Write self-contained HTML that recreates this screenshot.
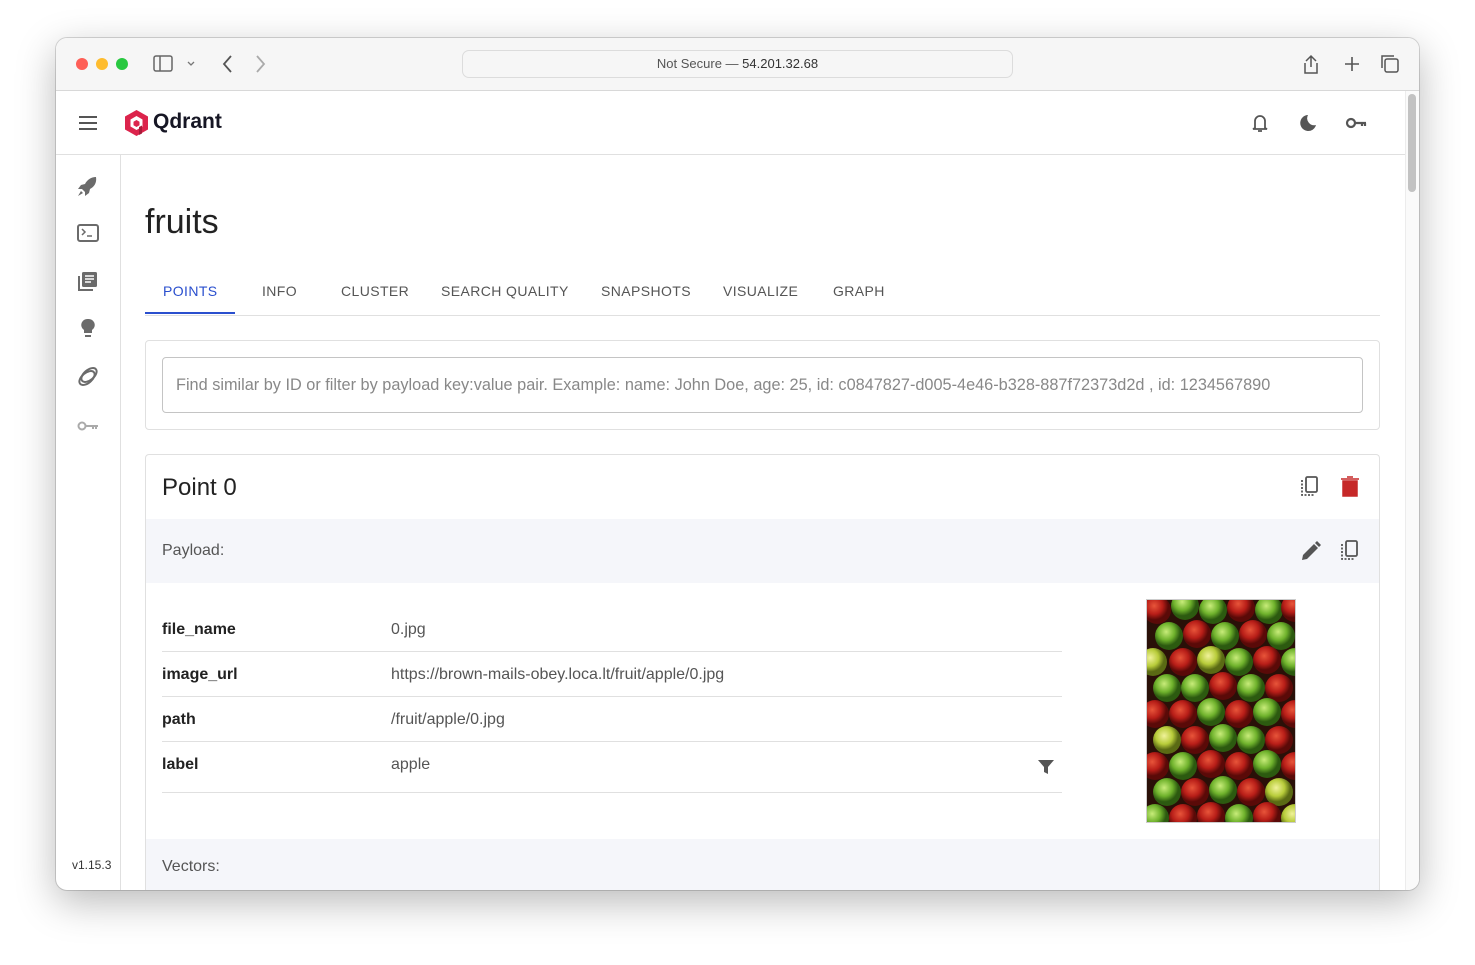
<!DOCTYPE html>
<html><head><meta charset="utf-8"><style>
*{box-sizing:border-box;margin:0;padding:0}
body{width:1475px;height:965px;background:#fff;font-family:"Liberation Sans",Arial,sans-serif;position:relative;overflow:hidden}
.win{position:absolute;left:56px;top:38px;width:1363px;height:852px;border-radius:11px;overflow:hidden;background:#fff;box-shadow:0 12px 40px rgba(0,0,0,.28),0 0 0 1px rgba(0,0,0,.15)}
.tb{position:absolute;left:0;top:0;width:100%;height:53px;background:#f6f6f6;border-bottom:1px solid #d8d8d8}
.dot{position:absolute;top:20px;width:12px;height:12px;border-radius:50%}
.url{position:absolute;left:406px;top:12px;width:551px;height:28px;border:1px solid #dcdcdc;border-radius:7px;background:#f6f6f6;font-size:13px;color:#333;text-align:center;line-height:26px}
.hdr{position:absolute;left:0;top:53px;width:1349px;height:64px;border-bottom:1px solid #e0e0e0}
.side{position:absolute;left:0;top:117px;width:65px;height:735px;border-right:1px solid #e0e0e0}
.scroll{position:absolute;left:1349px;top:53px;width:14px;height:799px;background:#fafafa;border-left:1px solid #ececec}
.thumb{position:absolute;left:1352px;top:56px;width:8px;height:98px;background:#c2c2c2;border-radius:4px}
.abs{position:absolute}
.tab{position:absolute;top:245px;font-size:14px;color:#555;letter-spacing:.4px}
.card{position:absolute;left:89px;width:1235px;border:1px solid #e0e0e0;border-radius:4px;background:#fff}
.row{position:absolute;left:106px;width:900px;height:45px;border-bottom:1px solid #e0e0e0;font-size:16px}
.row b{position:absolute;left:0;top:14px;color:#222}
.row span{position:absolute;left:229px;top:14px;color:#555}
</style></head><body>
<div class="win">
<div class="tb">
<div class="dot" style="left:20px;background:#fe5f57"></div>
<div class="dot" style="left:40px;background:#febc2e"></div>
<div class="dot" style="left:60px;background:#28c840"></div>
<svg class="abs" style="left:97px;top:17px" width="60" height="18"><rect x="1" y="1" width="18" height="15" rx="2" fill="none" stroke="#666" stroke-width="1.5"/><line x1="7" y1="1" x2="7" y2="16" stroke="#666" stroke-width="1.5"/><path d="M35 7l3 3 3-3" fill="none" stroke="#777" stroke-width="1.3"/></svg>
<svg class="abs" style="left:163px;top:16px" width="50" height="20"><path d="M12 2l-7 8 7 8" fill="none" stroke="#555" stroke-width="1.8"/><path d="M38 2l7 8-7 8" fill="none" stroke="#aaa" stroke-width="1.8"/></svg>
<div class="url"><span style="color:#555">Not Secure — </span>54.201.32.68</div>
<svg class="abs" style="left:1243px;top:14px" width="110" height="24"><path d="M17 9l-5-5-5 5M12 4v11M6 11v10h12V11" fill="none" stroke="#555" stroke-width="1.5"/><path d="M53 5v14M46 12h14" stroke="#555" stroke-width="1.6"/><rect x="86" y="7" width="13" height="13" rx="2" fill="none" stroke="#555" stroke-width="1.5"/><path d="M83 16V4h12" fill="none" stroke="#555" stroke-width="1.5"/></svg>
</div>
<div class="hdr">
<svg class="abs" style="left:22px;top:24px" width="20" height="16"><path d="M1 2h18M1 8h18M1 14h18" stroke="#555" stroke-width="2"/></svg>
<svg class="abs" style="left:68px;top:18px" width="25" height="28"><path d="M12.5 1L24 7.5v13L12.5 27 1 20.5v-13z" fill="#dc244c"/><path d="M12.5 7l6 3.5v7l-6 3.5-6-3.5v-7z" fill="#fff"/><path d="M12.5 11l3 1.8v3.5l-3 1.7-3-1.7v-3.5z" fill="#dc244c"/><path d="M15 18v8l3-1.5v-8z" fill="#a81c3a"/></svg>
<div class="abs" style="left:97px;top:19px;font-size:21px;font-weight:bold;color:#161624">Qdrant</div>
<svg class="abs" style="left:1194px;top:20px" width="120" height="24"><path d="M5 17V10a5 5 0 0110 0v7l2 1H3zM8 20h4" fill="none" stroke="#555" stroke-width="1.8"/><path d="M58 4a8 8 0 108 10 7 7 0 01-8-10z" fill="#555"/><circle cx="101" cy="12" r="4" fill="none" stroke="#555" stroke-width="2.2"/><path d="M105 12h11M112 12v3M115 12v3" stroke="#555" stroke-width="2.2"/></svg>
</div>
<div class="side">
<svg class="abs" style="left:21px;top:21px" width="22" height="270" fill="#6b6b6b">
<path d="M19 1c-5 0-9 3-11 7l-4 1-3 4 4 0 3 3 0 4 4-3 1-4c4-2 7-6 6-12zM4 15l-3 5 5-3z"/>
<rect x="1" y="49" width="20" height="16" rx="2" fill="none" stroke="#6b6b6b" stroke-width="2"/><path d="M5 53l3 3-3 3M10 60h5" stroke="#6b6b6b" stroke-width="1.5" fill="none"/>
<rect x="5" y="96" width="15" height="15" rx="1.5"/><path d="M2 100v14h14" stroke="#6b6b6b" stroke-width="2" fill="none"/><path d="M8 100h9M8 103h9M8 106h6" stroke="#fff" stroke-width="1.4"/>
<path d="M11 143a6 6 0 00-4 11v3h8v-3a6 6 0 00-4-11zM8 159h6v2H8z"/>
<ellipse cx="12" cy="199" rx="9" ry="5" transform="rotate(-40 12 199)" fill="none" stroke="#6b6b6b" stroke-width="2"/><ellipse cx="10" cy="202" rx="9" ry="5" transform="rotate(-40 10 202)" fill="none" stroke="#6b6b6b" stroke-width="2"/>
<circle cx="5" cy="250" r="3.5" fill="none" stroke="#aaa" stroke-width="2"/><path d="M9 250h12M16 250v3M19 250v3" stroke="#aaa" stroke-width="2"/>
</svg>
<div class="abs" style="left:16px;top:703px;font-size:12px;color:#333">v1.15.3</div>
</div>
<div class="abs" style="left:89px;top:165px;font-size:34px;color:#222">fruits</div>
<div class="tab" style="left:107px;color:#2a4fce">POINTS</div>
<div class="abs" style="left:89px;top:274px;width:90px;height:2px;background:#2a4fce"></div>
<div class="tab" style="left:206px">INFO</div>
<div class="tab" style="left:285px">CLUSTER</div>
<div class="tab" style="left:385px">SEARCH QUALITY</div>
<div class="tab" style="left:545px">SNAPSHOTS</div>
<div class="tab" style="left:667px">VISUALIZE</div>
<div class="tab" style="left:777px">GRAPH</div>
<div class="abs" style="left:89px;top:277px;width:1235px;height:1px;background:#e0e0e0"></div>
<div class="card" style="top:302px;height:90px">
<div class="abs" style="left:16px;top:16px;width:1201px;height:56px;border:1px solid #c4c4c4;border-radius:4px;font-size:16.3px;color:#888;padding:18px 13px;white-space:nowrap">Find similar by ID or filter by payload key:value pair. Example: name: John Doe, age: 25, id: c0847827-d005-4e46-b328-887f72373d2d , id: 1234567890</div>
</div>
<div class="card" style="top:416px;height:460px;border-bottom:none">
<div class="abs" style="left:16px;top:19px;font-size:24px;color:#222">Point 0</div>
<svg class="abs" style="left:1154px;top:20px" width="70" height="24"><rect x="6" y="2" width="11" height="15" rx="1.5" fill="none" stroke="#555" stroke-width="1.8"/><path d="M2 5v15h12" fill="none" stroke="#555" stroke-width="1.8" stroke-dasharray="2 1.5"/><path d="M43 6h14v15H43zM41 4h18M47 2h6" fill="#c62828" stroke="#c62828" stroke-width="1.5"/></svg>
<div class="abs" style="left:0;top:64px;width:1233px;height:64px;background:#f5f6fa"></div>
<div class="abs" style="left:16px;top:87px;font-size:16px;color:#555">Payload:</div>
<svg class="abs" style="left:1154px;top:84px" width="70" height="24"><path d="M2 21l1-5L14 5l4 4L7 20zM15 4l2-2 4 4-2 2z" fill="#555"/><rect x="46" y="2" width="11" height="15" rx="1.5" fill="none" stroke="#555" stroke-width="1.8"/><path d="M42 5v15h12" fill="none" stroke="#555" stroke-width="1.8" stroke-dasharray="2 1.5"/></svg>
<svg class="abs" style="left:1000px;top:144px;border:1px solid #ccc" width="150" height="224">
<defs>
<radialGradient id="r" cx=".4" cy=".35"><stop offset="0" stop-color="#e8553a"/><stop offset=".6" stop-color="#b81e18"/><stop offset="1" stop-color="#5a0a08"/></radialGradient>
<radialGradient id="g" cx=".4" cy=".35"><stop offset="0" stop-color="#c8ec7a"/><stop offset=".6" stop-color="#6fb22c"/><stop offset="1" stop-color="#2c5a10"/></radialGradient>
<radialGradient id="y" cx=".4" cy=".35"><stop offset="0" stop-color="#f0f29a"/><stop offset=".6" stop-color="#b8cc3a"/><stop offset="1" stop-color="#5a6a14"/></radialGradient>
</defs>
<rect width="150" height="224" fill="#2a1008"/>
<g>
<circle cx="10" cy="10" r="14" fill="url(#r)"/><circle cx="38" cy="6" r="14" fill="url(#g)"/><circle cx="66" cy="10" r="14" fill="url(#g)"/><circle cx="94" cy="8" r="14" fill="url(#r)"/><circle cx="122" cy="10" r="14" fill="url(#g)"/><circle cx="148" cy="8" r="14" fill="url(#r)"/>
<circle cx="22" cy="36" r="14" fill="url(#g)"/><circle cx="50" cy="34" r="14" fill="url(#r)"/><circle cx="78" cy="36" r="14" fill="url(#g)"/><circle cx="106" cy="34" r="14" fill="url(#r)"/><circle cx="134" cy="36" r="14" fill="url(#g)"/>
<circle cx="6" cy="62" r="14" fill="url(#y)"/><circle cx="36" cy="62" r="14" fill="url(#r)"/><circle cx="64" cy="60" r="14" fill="url(#y)"/><circle cx="92" cy="62" r="14" fill="url(#g)"/><circle cx="120" cy="60" r="14" fill="url(#r)"/><circle cx="148" cy="62" r="14" fill="url(#g)"/>
<circle cx="20" cy="88" r="14" fill="url(#g)"/><circle cx="48" cy="88" r="14" fill="url(#g)"/><circle cx="76" cy="86" r="14" fill="url(#r)"/><circle cx="104" cy="88" r="14" fill="url(#g)"/><circle cx="132" cy="88" r="14" fill="url(#r)"/>
<circle cx="8" cy="114" r="14" fill="url(#r)"/><circle cx="36" cy="114" r="14" fill="url(#r)"/><circle cx="64" cy="112" r="14" fill="url(#g)"/><circle cx="92" cy="114" r="14" fill="url(#r)"/><circle cx="120" cy="112" r="14" fill="url(#g)"/><circle cx="148" cy="114" r="14" fill="url(#r)"/>
<circle cx="20" cy="140" r="14" fill="url(#y)"/><circle cx="48" cy="140" r="14" fill="url(#r)"/><circle cx="76" cy="138" r="14" fill="url(#g)"/><circle cx="104" cy="140" r="14" fill="url(#g)"/><circle cx="132" cy="140" r="14" fill="url(#r)"/>
<circle cx="8" cy="166" r="14" fill="url(#r)"/><circle cx="36" cy="166" r="14" fill="url(#g)"/><circle cx="64" cy="164" r="14" fill="url(#r)"/><circle cx="92" cy="166" r="14" fill="url(#r)"/><circle cx="120" cy="164" r="14" fill="url(#g)"/><circle cx="148" cy="166" r="14" fill="url(#r)"/>
<circle cx="20" cy="192" r="14" fill="url(#g)"/><circle cx="48" cy="192" r="14" fill="url(#r)"/><circle cx="76" cy="190" r="14" fill="url(#g)"/><circle cx="104" cy="192" r="14" fill="url(#r)"/><circle cx="132" cy="192" r="14" fill="url(#y)"/>
<circle cx="8" cy="218" r="14" fill="url(#g)"/><circle cx="36" cy="218" r="14" fill="url(#r)"/><circle cx="64" cy="216" r="14" fill="url(#r)"/><circle cx="92" cy="218" r="14" fill="url(#g)"/><circle cx="120" cy="216" r="14" fill="url(#r)"/><circle cx="148" cy="218" r="14" fill="url(#y)"/>
</g></svg>
<div class="abs" style="left:0;top:384px;width:1233px;height:76px;background:#f5f6fa"></div>
<div class="abs" style="left:16px;top:403px;font-size:16px;color:#555">Vectors:</div>
</div>
<div class="row" style="top:569px"><b>file_name</b><span>0.jpg</span></div>
<div class="row" style="top:614px"><b>image_url</b><span>https://brown-mails-obey.loca.lt/fruit/apple/0.jpg</span></div>
<div class="row" style="top:659px"><b>path</b><span>/fruit/apple/0.jpg</span></div>
<div class="row" style="top:704px;height:51px"><b>label</b><span>apple</span>
<svg class="abs" style="left:875px;top:17px" width="18" height="16"><path d="M1 1h16l-6 7v7l-4-2V8z" fill="#555"/></svg></div>
<div class="scroll"></div><div class="thumb"></div>
</div>
</body></html>
